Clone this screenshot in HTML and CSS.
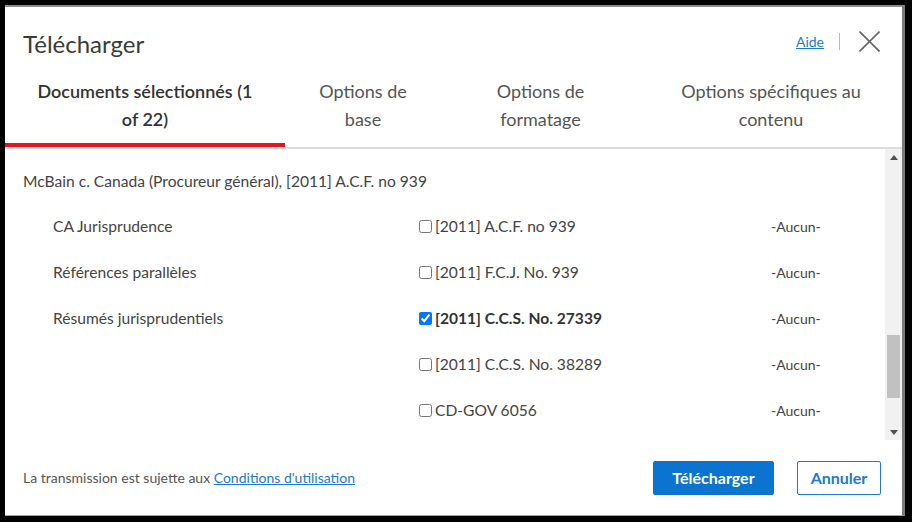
FILE: index.html
```html
<!DOCTYPE html>
<html lang="fr">
<head>
    <meta charset="UTF-8">
    <title>Télécharger</title>
    <link rel="stylesheet" href="styles.css">
</head>
<body>
    <div class="dialog">
        <div class="dialog-header">
            <h1 class="dialog-title">Télécharger</h1>
            <div class="header-actions">
                <a class="help-link" href="#">Aide</a>
                <span class="header-sep"></span>
                <button class="close-btn" aria-label="Fermer">
                    <svg width="21" height="21" viewBox="0 0 21 21">
                        <path d="M0.5 0.5 L20.5 20.5 M20.5 0.5 L0.5 20.5" stroke="#666" stroke-width="1.6" fill="none"/>
                    </svg>
                </button>
            </div>
        </div>

        <div class="tabs">
            <div class="tab tab-active">Documents sélectionnés (1 of 22)</div>
            <div class="tab">Options de base</div>
            <div class="tab">Options de formatage</div>
            <div class="tab">Options spécifiques au contenu</div>
        </div>

        <div class="content">
            <div class="doc-list">
                <div class="doc-title">McBain c. Canada (Procureur général), [2011] A.C.F. no 939</div>

                <div class="doc-row">
                    <span class="doc-label">CA Jurisprudence</span>
                    <label class="doc-check"><input type="checkbox">[2011] A.C.F. no 939</label>
                    <span class="doc-none">-Aucun-</span>
                </div>
                <div class="doc-row">
                    <span class="doc-label">Références parallèles</span>
                    <label class="doc-check"><input type="checkbox">[2011] F.C.J. No. 939</label>
                    <span class="doc-none">-Aucun-</span>
                </div>
                <div class="doc-row">
                    <span class="doc-label">Résumés jurisprudentiels</span>
                    <label class="doc-check checked"><input type="checkbox" checked>[2011] C.C.S. No. 27339</label>
                    <span class="doc-none">-Aucun-</span>
                </div>
                <div class="doc-row">
                    <span class="doc-label"></span>
                    <label class="doc-check"><input type="checkbox">[2011] C.C.S. No. 38289</label>
                    <span class="doc-none">-Aucun-</span>
                </div>
                <div class="doc-row">
                    <span class="doc-label"></span>
                    <label class="doc-check"><input type="checkbox">CD-GOV 6056</label>
                    <span class="doc-none">-Aucun-</span>
                </div>
            </div>

            <div class="scrollbar">
                <span class="scroll-arrow up"></span>
                <span class="scroll-thumb"></span>
                <span class="scroll-arrow down"></span>
            </div>
        </div>

        <div class="dialog-footer">
            <p class="terms">La transmission est sujette aux <a href="#">Conditions d'utilisation</a></p>
            <div class="footer-actions">
                <button class="btn btn-primary">Télécharger</button>
                <button class="btn btn-secondary">Annuler</button>
            </div>
        </div>
    </div>
</body>
</html>
```

FILE: styles.css
```css
html, body {
    margin: 0;
    padding: 0;
    background-color: #000;
    height: 100%;
    overflow: hidden;
}
body {
    font-family: Lato, "Liberation Sans", sans-serif;
    color: #444;
}
.dialog {
    box-sizing: border-box;
    margin: 5px 7px 0 5px;
    width: 900px;
    height: 511px;
    background-color: #fff;
    border-top: 2px solid #8c8c8c;
    border-right: 3px solid #7a7a7a;
    border-bottom: 1px solid #a0a0a0;
    display: flex;
    flex-direction: column;
}

/* en-tête */
.dialog-header {
    display: flex;
    align-items: center;
    justify-content: space-between;
    padding: 23px 23px 14px 18px;
}
.dialog-title {
    margin: 0;
    font-size: 24px;
    line-height: 28px;
    font-weight: 400;
    color: #3a3a3a;
}
.header-actions {
    display: flex;
    align-items: center;
    margin-top: -5px;
}
.help-link {
    font-size: 14px;
    color: #1a7bd0;
}
.header-sep {
    width: 1px;
    height: 17px;
    background-color: #bbb;
    margin: 0 19px 0 15px;
}
.close-btn {
    border: none;
    background: none;
    padding: 0;
    width: 21px;
    height: 21px;
    margin-right: -1px;
    cursor: pointer;
}
.close-btn svg {
    display: block;
}

/* onglets */
.tabs {
    display: grid;
    grid-template-columns: 280px 156px 199px 1fr;
    border-bottom: 2px solid #dcdcdc;
}
.tab {
    padding: 5px 16px 10px;
    font-size: 18px;
    line-height: 28px;
    text-align: center;
    color: #555;
    border-bottom: 4px solid transparent;
}
.tab-active {
    font-weight: 600;
    color: #333;
    border-bottom-color: #e3161e;
    padding-left: 28px;
    padding-right: 28px;
}

/* liste */
.content {
    display: flex;
    height: 291px;
    overflow: hidden;
}
.doc-list {
    flex: 1;
    padding-top: 9px;
    font-size: 15.6px;
}
.doc-title {
    height: 45px;
    line-height: 46px;
    padding-left: 18px;
}
.doc-row {
    display: grid;
    grid-template-columns: 366px 352px 1fr;
    align-items: center;
    height: 46px;
    padding-left: 48px;
}
.doc-check {
    display: flex;
    align-items: center;
}
.doc-check input {
    margin: 0 3px 0 0;
    width: 13px;
    height: 13px;
}
.doc-check.checked {
    font-weight: 700;
    color: #333;
}
.doc-none {
    font-size: 14px;
}

.scrollbar {
    width: 17px;
    background-color: #f1f1f1;
    display: flex;
    flex-direction: column;
    align-items: center;
}
.scroll-arrow {
    width: 0;
    height: 0;
    border-left: 4px solid transparent;
    border-right: 4px solid transparent;
}
.scroll-arrow.up {
    margin-top: 6px;
    border-bottom: 5px solid #505050;
}
.scroll-arrow.down {
    margin-top: auto;
    margin-bottom: 5px;
    border-top: 5px solid #505050;
}
.scroll-thumb {
    width: 13px;
    height: 63px;
    margin-top: 175px;
    background-color: #c1c1c1;
}

/* pied */
.dialog-footer {
    flex: 1;
    display: flex;
    align-items: center;
    justify-content: space-between;
    padding: 0 21px 0 18px;
}
.terms {
    margin: 0;
    font-size: 14px;
    color: #555;
}
.terms a {
    color: #1a7bd0;
}
.footer-actions {
    display: flex;
    gap: 23px;
}
.btn {
    height: 34px;
    border-radius: 2px;
    font-family: Lato, "Liberation Sans", sans-serif;
    font-size: 16px;
    font-weight: 700;
    cursor: pointer;
}
.btn-primary {
    width: 121px;
    background-color: #0b74d0;
    border: 1px solid #0b74d0;
    color: #fff;
}
.btn-secondary {
    width: 84px;
    background-color: #fff;
    border: 1px solid #1a7bd0;
    color: #1a7bd0;
}
```
